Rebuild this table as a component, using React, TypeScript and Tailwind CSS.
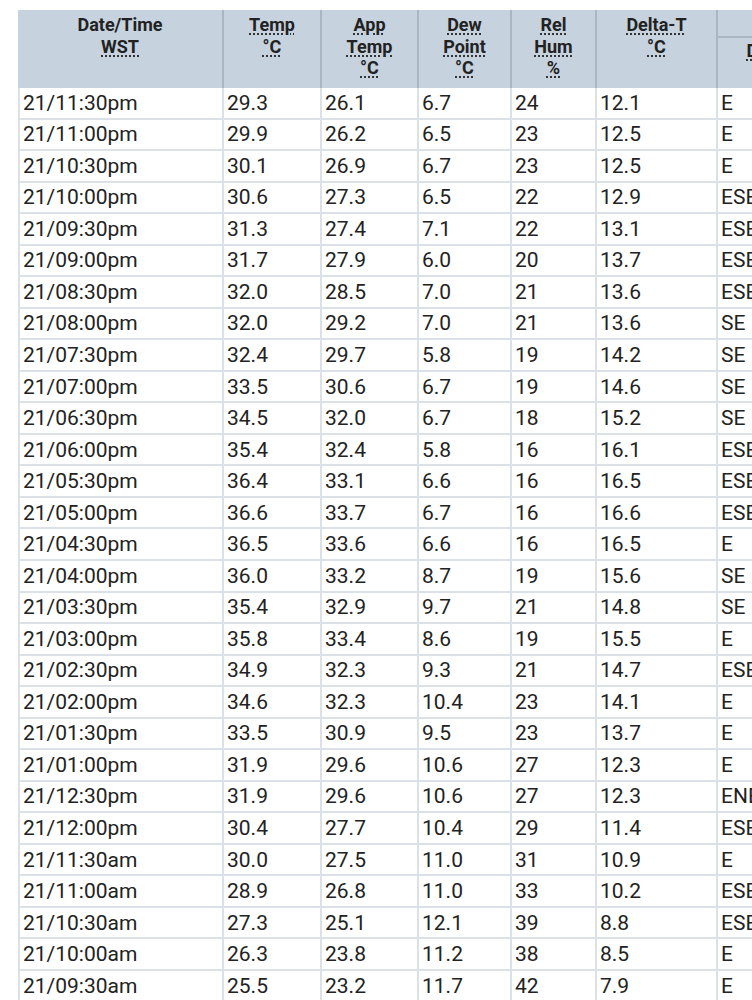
import React from 'react';

const rows: string[][] = [
  ['21/11:30pm', '29.3', '26.1', '6.7', '24', '12.1', 'E'],
  ['21/11:00pm', '29.9', '26.2', '6.5', '23', '12.5', 'E'],
  ['21/10:30pm', '30.1', '26.9', '6.7', '23', '12.5', 'E'],
  ['21/10:00pm', '30.6', '27.3', '6.5', '22', '12.9', 'ESE'],
  ['21/09:30pm', '31.3', '27.4', '7.1', '22', '13.1', 'ESE'],
  ['21/09:00pm', '31.7', '27.9', '6.0', '20', '13.7', 'ESE'],
  ['21/08:30pm', '32.0', '28.5', '7.0', '21', '13.6', 'ESE'],
  ['21/08:00pm', '32.0', '29.2', '7.0', '21', '13.6', 'SE'],
  ['21/07:30pm', '32.4', '29.7', '5.8', '19', '14.2', 'SE'],
  ['21/07:00pm', '33.5', '30.6', '6.7', '19', '14.6', 'SE'],
  ['21/06:30pm', '34.5', '32.0', '6.7', '18', '15.2', 'SE'],
  ['21/06:00pm', '35.4', '32.4', '5.8', '16', '16.1', 'ESE'],
  ['21/05:30pm', '36.4', '33.1', '6.6', '16', '16.5', 'ESE'],
  ['21/05:00pm', '36.6', '33.7', '6.7', '16', '16.6', 'ESE'],
  ['21/04:30pm', '36.5', '33.6', '6.6', '16', '16.5', 'E'],
  ['21/04:00pm', '36.0', '33.2', '8.7', '19', '15.6', 'SE'],
  ['21/03:30pm', '35.4', '32.9', '9.7', '21', '14.8', 'SE'],
  ['21/03:00pm', '35.8', '33.4', '8.6', '19', '15.5', 'E'],
  ['21/02:30pm', '34.9', '32.3', '9.3', '21', '14.7', 'ESE'],
  ['21/02:00pm', '34.6', '32.3', '10.4', '23', '14.1', 'E'],
  ['21/01:30pm', '33.5', '30.9', '9.5', '23', '13.7', 'E'],
  ['21/01:00pm', '31.9', '29.6', '10.6', '27', '12.3', 'E'],
  ['21/12:30pm', '31.9', '29.6', '10.6', '27', '12.3', 'ENE'],
  ['21/12:00pm', '30.4', '27.7', '10.4', '29', '11.4', 'ESE'],
  ['21/11:30am', '30.0', '27.5', '11.0', '31', '10.9', 'E'],
  ['21/11:00am', '28.9', '26.8', '11.0', '33', '10.2', 'ESE'],
  ['21/10:30am', '27.3', '25.1', '12.1', '39', '8.8', 'ESE'],
  ['21/10:00am', '26.3', '23.8', '11.2', '38', '8.5', 'E'],
  ['21/09:30am', '25.5', '23.2', '11.7', '42', '7.9', 'E'],
];

// dotted underline, like <abbr title=...> in the source page
const Abbr = ({ children }: { children: React.ReactNode }) => (
  <abbr className="no-underline">
    <span className="underline decoration-dotted decoration-[#222] underline-offset-[3px]">
      {children}
    </span>
  </abbr>
);

const thBase =
  'bg-[#c6d2de] border-r-2 border-[#aab6c3] align-top text-center font-bold text-[18px] leading-[21.5px] text-[#222] px-[3px]';

export default function App() {
  return (
    <div
      className="w-[752px] h-[1000px] overflow-hidden bg-white pl-[18px] pt-[10px]"
      style={{ fontFamily: 'Roboto, "Liberation Sans", sans-serif' }}
    >
      <table className="table-fixed border-separate border-spacing-0 w-[782px]">
        <colgroup>
          <col className="w-[206px]" />
          <col className="w-[98px]" />
          <col className="w-[97px]" />
          <col className="w-[93px]" />
          <col className="w-[85px]" />
          <col className="w-[121px]" />
          <col className="w-[82px]" />
        </colgroup>
        <thead>
          <tr className="h-[28px]">
            <th rowSpan={2} className={`${thBase} pt-[4px]`}>
              Date/Time
              <br />
              <Abbr>WST</Abbr>
            </th>
            <th rowSpan={2} className={`${thBase} pt-[4px]`}>
              <Abbr>Temp</Abbr>
              <br />
              <Abbr>°C</Abbr>
            </th>
            <th rowSpan={2} className={`${thBase} pt-[4px]`}>
              <Abbr>App</Abbr>
              <br />
              <Abbr>Temp</Abbr>
              <br />
              <Abbr>°C</Abbr>
            </th>
            <th rowSpan={2} className={`${thBase} pt-[4px]`}>
              <Abbr>Dew</Abbr>
              <br />
              <Abbr>Point</Abbr>
              <br />
              <Abbr>°C</Abbr>
            </th>
            <th rowSpan={2} className={`${thBase} pt-[4px]`}>
              <Abbr>Rel</Abbr>
              <br />
              <Abbr>Hum</Abbr>
              <br />
              <Abbr>%</Abbr>
            </th>
            <th rowSpan={2} className={`${thBase} pt-[4px]`}>
              <Abbr>Delta-T</Abbr>
              <br />
              <Abbr>°C</Abbr>
            </th>
            <th className={`${thBase} border-b-2 pt-[3px]`}></th>
          </tr>
          <tr className="h-[50px]">
            <th className={`${thBase} pt-[2px]`}>
              <Abbr>Dir</Abbr>
            </th>
          </tr>
        </thead>
        <tbody>
          {rows.map((r) => (
            <tr key={r[0]}>
              {r.map((c, i) => (
                <td
                  key={i}
                  className={`h-[31.54px] border-r-2 border-b-2 border-[#dce1e7] px-[3px] text-left align-middle text-[21px] leading-[24px] text-[#222] whitespace-nowrap ${
                    i === 0 ? 'border-l-2' : ''
                  }`}
                >
                  {c}
                </td>
              ))}
            </tr>
          ))}
        </tbody>
      </table>
    </div>
  );
}
